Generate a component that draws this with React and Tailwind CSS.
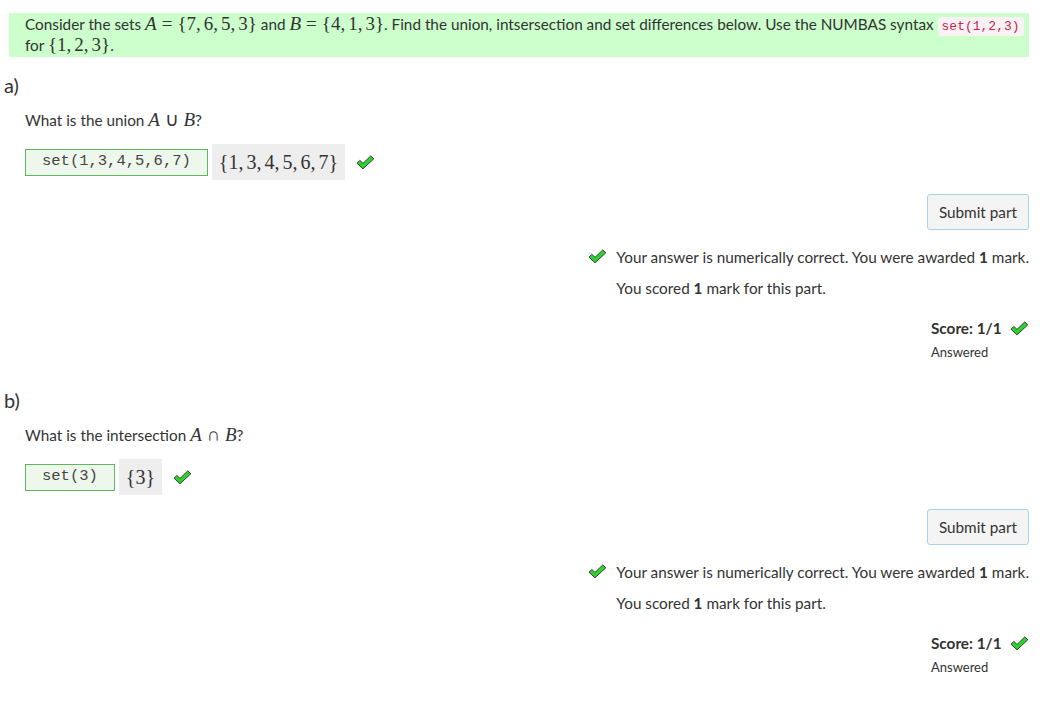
import React from "react";

const Check = ({ className = "" }) => (
  <svg width="19" height="15" viewBox="0 0 19 15" className={className}>
    <path
      d="M1 8.2 L3.8 5.4 L7 8.4 L14.8 0.9 L17.8 3.8 L7 13.8 Z"
      fill="#2bd42b"
      stroke="#3a3a3a"
      strokeWidth="1"
      strokeLinejoin="round"
    />
  </svg>
);

const M = ({ children, className = "" }) => (
  <span className={"font-['Liberation_Serif',serif] leading-none " + className}>{children}</span>
);
const I = ({ children }) => <span className="italic">{children}</span>;
const C = () => <span className="mr-[3px]">,</span>;
const Eq = () => <span className="mx-[5px]">=</span>;

const setOf = (items) => (
  <>
    {"{"}
    {items.map((x, i) => (
      <React.Fragment key={i}>
        {x}
        {i < items.length - 1 && <C />}
      </React.Fragment>
    ))}
    {"}"}
  </>
);

function Part({ label, question, code, preview }) {
  return (
    <div>
      <div className="pl-[4px] text-[20px] leading-[24px] h-[24px]">{label}</div>
      <div className="pl-[25px] mt-[13px] leading-[21px] h-[21px]">{question}</div>
      <div className="pl-[25px] mt-[13px] flex items-center">
        <div className="h-[27px] border border-[#5cb85c] bg-[#eef7ec] px-[16px] flex items-center font-['Liberation_Mono',monospace] text-[15.5px] text-[#444]">
          {code}
        </div>
        <div className="ml-[4px] h-[36px] bg-[#eeeeee] px-[7px] flex items-center">
          <M className="text-[20px]">{preview}</M>
        </div>
        <Check className="ml-[11px]" />
      </div>
      <div className="flex justify-end mr-[27px] mt-[14px]">
        <button className="h-[36px] px-[11px] bg-[#f4f4f4] border border-[#a9d2f0] rounded-[3px] text-[15.3px] text-[#333]">
          Submit part
        </button>
      </div>
      <div className="flex justify-end mr-[27px] mt-[17px]">
        <div>
          <div className="flex items-center leading-[21px]">
            <Check className="mr-[9px] -mt-[2px]" />
            <span>
              Your answer is numerically correct. You were awarded <b>1</b> mark.
            </span>
          </div>
          <div className="pl-[28px] mt-[10px] leading-[21px]">
            You scored <b>1</b> mark for this part.
          </div>
        </div>
      </div>
      <div className="flex justify-end mr-[27px] mt-[19px]">
        <div className="w-[98px]">
          <div className="flex items-center justify-between leading-[21px]">
            <b>Score: 1/1</b>
            <Check />
          </div>
          <div className="text-[13px] leading-[18px] mt-[4px]">Answered</div>
        </div>
      </div>
    </div>
  );
}

export default function App() {
  return (
    <div className="font-['Lato',sans-serif] text-[15.3px] text-[#333] bg-white w-[1056px] h-[703px] overflow-hidden pt-[13px]">
      <div className="ml-[9px] w-[1020px] bg-[#ccffcc] pl-[16px] pr-[4px] py-[1px] leading-[21px]">
        Consider the sets{" "}
        <M className="text-[19px]">
          <I>A</I>
          <Eq />
          {setOf([7, 6, 5, 3])}
        </M>{" "}
        and{" "}
        <M className="text-[19px]">
          <I>B</I>
          <Eq />
          {setOf([4, 1, 3])}
        </M>
        . Find the union, intsersection and set differences below. Use the NUMBAS syntax{" "}
        <code className="font-['Liberation_Mono',monospace] text-[13px] leading-none text-[#c7254e] bg-[#f9f2f4] px-[4px] py-[2px] rounded-[3px]">
          set(1,2,3)
        </code>{" "}
        for{" "}
        <M className="text-[19px]">{setOf([1, 2, 3])}</M>.
      </div>
      <div className="mt-[16px]">
        <Part
          label="a)"
          question={
            <>
              What is the union{" "}
              <M className="text-[19px]">
                <I>A</I> ∪ <I>B</I>
              </M>
              ?
            </>
          }
          code="set(1,3,4,5,6,7)"
          preview={setOf([1, 3, 4, 5, 6, 7])}
        />
      </div>
      <div className="mt-[27px]">
        <Part
          label="b)"
          question={
            <>
              What is the intersection{" "}
              <M className="text-[19px]">
                <I>A</I> ∩ <I>B</I>
              </M>
              ?
            </>
          }
          code="set(3)"
          preview={setOf([3])}
        />
      </div>
    </div>
  );
}
